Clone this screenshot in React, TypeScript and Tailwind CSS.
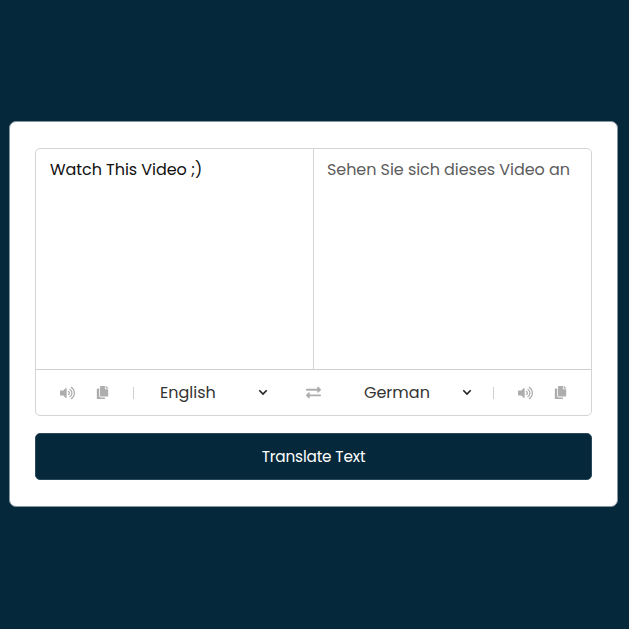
import type { ReactNode } from "react";
import { FaVolumeUp, FaCopy, FaExchangeAlt } from "react-icons/fa";

function Chevron() {
  return (
    <svg width="10" height="7" viewBox="0 0 10 7" fill="none" className="shrink-0">
      <path d="M1.3 1.3 5 5 8.7 1.3" stroke="#222" strokeWidth="1.6" />
    </svg>
  );
}

function Language({ children, className }: { children: ReactNode; className: string }) {
  return (
    <button className={`flex items-center justify-between text-[16px] text-[#333] ${className}`}>
      <span className="pt-px">{children}</span>
      <Chevron />
    </button>
  );
}

function Tools() {
  return (
    <div className="flex items-center text-[#adadad]">
      <FaVolumeUp className="h-[14px] w-[15px]" />
      <FaCopy className="ml-[21px] h-[13px] w-[13px]" />
    </div>
  );
}

export default function App() {
  return (
    <div className="h-[629px] w-[629px] bg-[#05283b] pl-[9px] pt-[121px] font-['Poppins','Inter',sans-serif]">
      <main className="h-[386px] w-[609px] rounded-[7px] border border-[#8696a0] bg-white pl-[25px] pt-[26px]">
        <section className="h-[268px] w-[557px] rounded-[5px] border border-[#d5d5d5]">
          <div className="flex h-[221px] border-b border-[#d0d0d0] text-[16px] leading-[24px] tracking-[-0.06px]">
            <div className="w-[278px] border-r border-[#d5d5d5] pl-[14px] pt-[9px] text-[#111]">
              <span className="whitespace-nowrap">Watch This Video ;)</span>
            </div>
            <div className="pl-[13px] pt-[9px] text-[#5c5c5c]">
              <span className="whitespace-nowrap">Sehen Sie sich dieses Video an</span>
            </div>
          </div>
          <div className="flex h-[45px] items-center pl-[24px]">
            <Tools />
            <span className="ml-[24px] h-[12px] w-px bg-[#cfcfcf]" />
            <Language className="ml-[26px] w-[108px]">English</Language>
            <FaExchangeAlt className="ml-[38px] h-[15px] w-[15px] text-[#adadad]" />
            <Language className="ml-[43px] w-[108px]">German</Language>
            <span className="ml-[21px] mr-[24px] h-[12px] w-px bg-[#cfcfcf]" />
            <Tools />
          </div>
        </section>
        <button className="mt-[17px] flex h-[47px] w-[557px] items-center justify-center rounded-[5px] border border-[#294858] bg-[#05283b] pt-px text-[15.3px] tracking-[-0.17px] text-white">
          Translate Text
        </button>
      </main>
    </div>
  );
}
